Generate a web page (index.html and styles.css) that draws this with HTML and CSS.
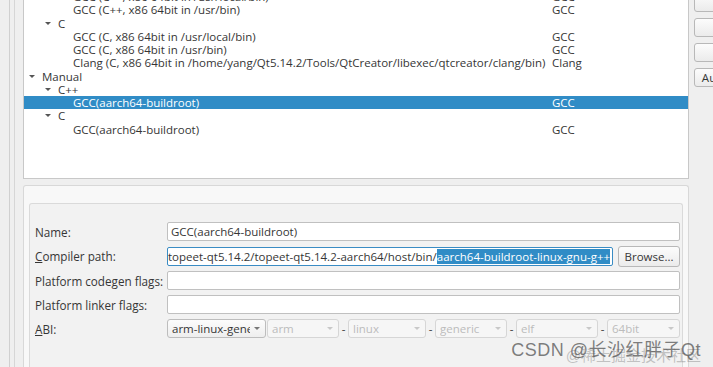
FILE: index.html
```html
<!DOCTYPE html>
<html lang="en">
  <head>
    <meta charset="UTF-8" />
    <title>Compilers</title>
    <link rel="stylesheet" href="styles.css">
  </head>
  <body>
    <div class="frame">
      <div class="frame-inner">
        <div class="content">
          <!-- compiler tree -->
          <div class="tree">
            <div class="tree-rows">
              <div class="row"><span class="name lvl2">GCC (C++, x86 64bit in /usr/local/bin)</span><span class="type">GCC</span></div>
              <div class="row"><span class="name lvl2">GCC (C++, x86 64bit in /usr/bin)</span><span class="type">GCC</span></div>
              <div class="row"><span class="name lvl1"><i class="arrow"></i>C</span><span class="type"></span></div>
              <div class="row"><span class="name lvl2">GCC (C, x86 64bit in /usr/local/bin)</span><span class="type">GCC</span></div>
              <div class="row"><span class="name lvl2">GCC (C, x86 64bit in /usr/bin)</span><span class="type">GCC</span></div>
              <div class="row"><span class="name lvl2">Clang (C, x86 64bit in /home/yang/Qt5.14.2/Tools/QtCreator/libexec/qtcreator/clang/bin)</span><span class="type">Clang</span></div>
              <div class="row"><span class="name lvl0"><i class="arrow"></i>Manual</span><span class="type"></span></div>
              <div class="row"><span class="name lvl1"><i class="arrow"></i>C++</span><span class="type"></span></div>
              <div class="row selected"><span class="name lvl2">GCC(aarch64-buildroot)</span><span class="type">GCC</span></div>
              <div class="row"><span class="name lvl1"><i class="arrow"></i>C</span><span class="type"></span></div>
              <div class="row"><span class="name lvl2">GCC(aarch64-buildroot)</span><span class="type">GCC</span></div>
            </div>
          </div>

          <!-- details of the selected compiler -->
          <div class="details">
            <div class="group">
              <div class="form">
                <label>Name:</label>
                <div class="field">GCC(aarch64-buildroot)</div>

                <label><u>C</u>ompiler path:</label>
                <div class="path-row">
                  <div class="field focus"><span>topeet-qt5.14.2/topeet-qt5.14.2-aarch64/host/bin/<span class="sel">aarch64-buildroot-linux-gnu-g++</span></span></div>
                  <button class="btn browse">Browse...</button>
                </div>

                <label>Platform codegen flags:</label>
                <div class="field"></div>

                <label>Platform linker flags:</label>
                <div class="field"></div>

                <label><u>A</u>BI:</label>
                <div class="abi">
                  <div class="combo abi-main"><span class="combo-text">arm-linux-generic-elf-64bit</span><i class="caret"></i></div>
                  <div class="combo disabled abi-arch"><span class="combo-text">arm</span><i class="caret"></i></div>
                  <span class="dash">-</span>
                  <div class="combo disabled abi-os"><span class="combo-text">linux</span><i class="caret"></i></div>
                  <span class="dash">-</span>
                  <div class="combo disabled abi-flavor"><span class="combo-text">generic</span><i class="caret"></i></div>
                  <span class="dash">-</span>
                  <div class="combo disabled abi-format"><span class="combo-text">elf</span><i class="caret"></i></div>
                  <span class="dash">-</span>
                  <div class="combo disabled abi-width"><span class="combo-text">64bit</span><i class="caret"></i></div>
                </div>
              </div>
            </div>
          </div>
        </div>

        <!-- side buttons, cut by the window edge -->
        <div class="side">
          <button class="btn">Remove</button>
          <button class="btn">Remove All</button>
          <button class="btn">Re-detect</button>
          <button class="btn">Auto-detection Settings...</button>
        </div>
      </div>
    </div>

    <div class="watermark">
      <span class="wm-back">@稀土掘金技术社区</span>
      <span class="wm-front">CSDN @长沙红胖子Qt</span>
    </div>
  </body>
</html>
```

FILE: styles.css
```css
/* page */
body {
  margin: 0;
  width: 713px;
  height: 367px;
  overflow: hidden;
  position: relative;
  background: #efefef;
  font-family: "Open Sans", "Noto Sans", sans-serif;
  font-size: 11.5px;
  color: #363636;
}

.frame {
  box-sizing: border-box;
  height: 367px;
  margin-left: 9px;
  padding-left: 4px;
  border-left: 1px solid #d0d0d0;
  overflow: hidden;
}

.frame-inner {
  display: flex;
  gap: 5px;
  height: 100%;
  padding-left: 8px;
  border-left: 1px solid #d6d6d6;
}

.content {
  flex: none;
  width: 666px;
}

/* tree */
.tree {
  box-sizing: border-box;
  height: 180px;
  margin-top: -1px;
  border: 1px solid #c8c8c8;
  background: #fff;
  overflow: hidden;
}

.tree-rows {
  margin-top: -10px;
}

.row {
  display: grid;
  grid-template-columns: 528px 1fr;
  height: 13.25px;
  line-height: 13.25px;
  white-space: nowrap;
}

.row.selected {
  background: #308cc6;
  color: #fff;
}

.name {
  display: flex;
  align-items: center;
}

.lvl0 { padding-left: 5px; }
.lvl1 { padding-left: 21px; }
.lvl2 { padding-left: 49px; }

.arrow {
  flex: none;
  width: 13px;
  display: flex;
  align-items: center;
}

.arrow::before {
  content: "";
  border-left: 3px solid transparent;
  border-right: 3px solid transparent;
  border-top: 3px solid #555;
}

/* details */
.details {
  box-sizing: border-box;
  height: 184px;
  margin-top: 6px;
  padding: 17px 5px 0;
  border: 1px solid #d8d8d8;
  border-bottom: none;
  border-radius: 3px 3px 0 0;
  background: #f8f8f8;
}

.group {
  box-sizing: border-box;
  height: 166px;
  padding: 18px 6px 0 5px;
  border: 1px solid #dadada;
  border-bottom: none;
  border-radius: 3px 3px 0 0;
  background: #f2f2f2;
}

.form {
  display: grid;
  grid-template-columns: 132px 1fr;
  grid-template-rows: 19px 20px 19px 19px 19px;
  row-gap: 5px;
  align-items: center;
}

.form label {
  font-size: 11.7px;
  white-space: nowrap;
}

.field {
  box-sizing: border-box;
  height: 19px;
  display: flex;
  align-items: center;
  padding: 0 3px;
  border: 1px solid #c0c0c0;
  border-radius: 2px;
  background: #fff;
  white-space: nowrap;
}

.path-row {
  display: flex;
  gap: 5px;
  align-items: center;
}

.field.focus {
  flex: 1;
  min-width: 0;
  justify-content: flex-end;
  overflow: hidden;
  padding: 0 2px 0 0;
  border-color: #3a8cc4;
}

.sel {
  background: #308cc6;
  color: #fff;
}

.btn {
  box-sizing: border-box;
  height: 19px;
  padding: 0 4px;
  border: 1px solid #b8b8b8;
  border-radius: 3px;
  background: linear-gradient(#fcfcfc, #ebebeb);
  font: inherit;
  color: inherit;
  white-space: nowrap;
}

.browse {
  flex: none;
  width: 62px;
  height: 21px;
}

/* ABI combos */
.abi {
  display: flex;
  align-items: center;
}

.combo {
  box-sizing: border-box;
  height: 19px;
  display: flex;
  align-items: center;
  padding: 0 5px 0 4px;
  border: 1px solid #bdbdbd;
  border-radius: 3px;
  background: linear-gradient(#fcfcfc, #eeeeee);
}

.combo-text {
  flex: 1;
  overflow: hidden;
  white-space: nowrap;
}

.caret {
  flex: none;
  margin-left: 4px;
  border-left: 3px solid transparent;
  border-right: 3px solid transparent;
  border-top: 3px solid #777;
}

.combo.disabled {
  color: #bcbcbc;
  border-color: #d6d6d6;
  background: #f6f6f6;
}

.combo.disabled .caret {
  border-top-color: #c8c8c8;
}

.abi-main { width: 99px; margin-right: 1px; }
.abi-arch { width: 72px; }
.abi-os { width: 78px; }
.abi-flavor { width: 72px; }
.abi-format { width: 82px; }
.abi-width { width: 73px; }

.dash {
  width: 9px;
  text-align: center;
}

/* right column */
.side {
  display: flex;
  flex-direction: column;
  gap: 6px;
  margin-top: -7px;
}

.side .btn {
  width: 150px;
  padding: 0 1px;
}

/* watermark */
.watermark {
  position: absolute;
  right: 12px;
  bottom: 6px;
  font-family: "Liberation Sans", "Noto Sans CJK SC", sans-serif;
}

.wm-front {
  position: relative;
  font-size: 18px;
  color: rgba(85, 85, 85, 0.75);
  letter-spacing: 0.5px;
}

.wm-back {
  position: absolute;
  right: 0;
  bottom: -4px;
  font-size: 15px;
  color: rgba(130, 130, 130, 0.45);
  white-space: nowrap;
}
```
